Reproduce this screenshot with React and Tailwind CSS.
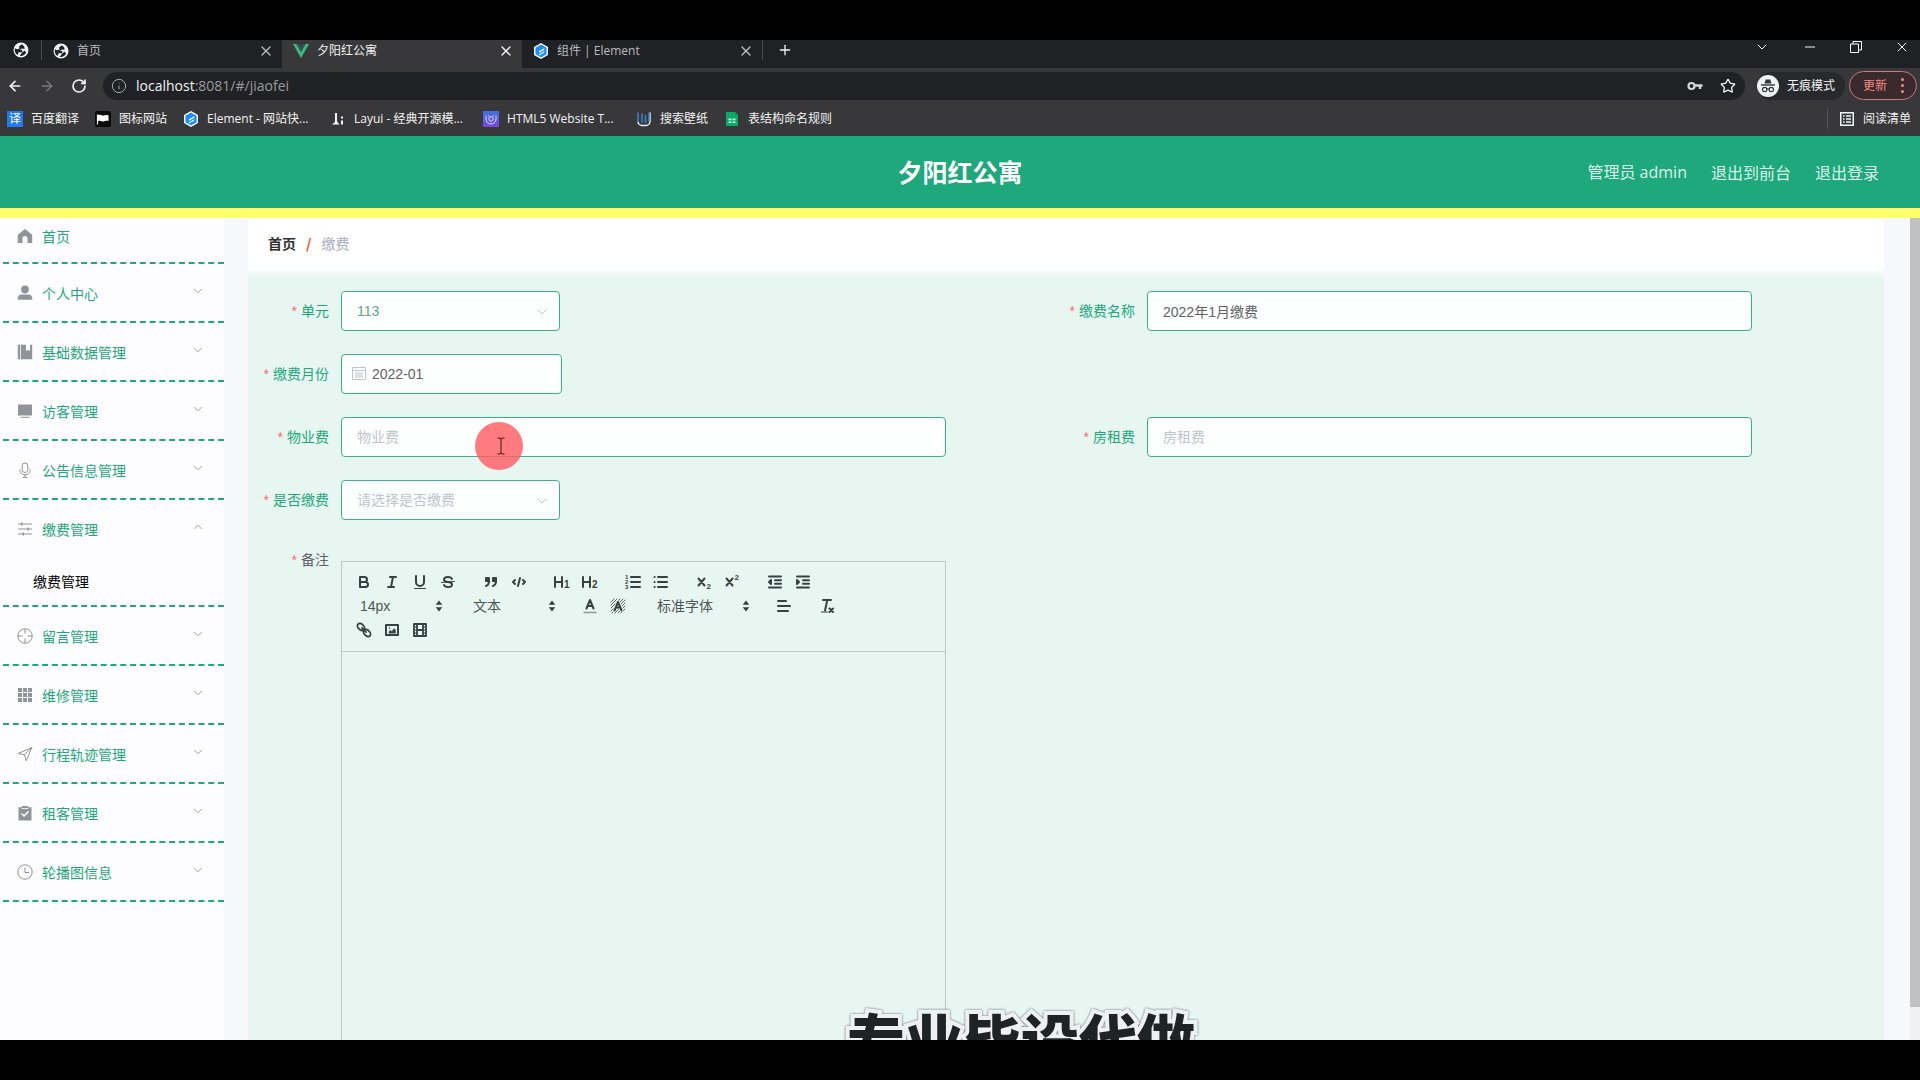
import React, { useState } from "react";
import {
  ArrowLeft,
  ArrowRight,
  ChevronDown,
  ChevronUp,
  Info,
  Minus,
  Plus,
  RotateCw,
  Star,
  X,
} from "lucide-react";

/* ---------- browser icons ---------- */

function GlobeIcon() {
  return (
    <svg viewBox="0 0 16 16" className="size-4 shrink-0">
      <circle cx="8" cy="8" r="7.5" fill="#f1f3f4" />
      <path
        d="M9 2.2 6 4.6l.6 1.8-2.4.9L2 6.2a6 6 0 0 0 2.6 6.7L5.8 10l3 .4.8-2L7 7.6l2.2-1.2L11.6 7l-.4-2.4zM9 10.8l-2.3 3.1c2.8.5 5.2-.9 6.4-3.4l-1.5-1.9z"
        fill="#202124"
      />
    </svg>
  );
}

function VueIcon() {
  return (
    <svg viewBox="0 0 16 14" className="h-[14px] w-4 shrink-0">
      <path d="M0 0h3.4L8 8l4.6-8H16L8 14z" fill="#41b883" />
      <path d="M3.4 0h2.8L8 3.2 9.8 0h2.8L8 8z" fill="#2b5a55" />
    </svg>
  );
}

function ElementIcon() {
  return (
    <svg viewBox="0 0 16 16" className="size-4 shrink-0">
      <path d="M8 0l7 4v8l-7 4-7-4V4z" fill="#fff" />
      <path d="M8 1.5l5.6 3.2v6.6L8 14.5l-5.600-3.200V4.700z" fill="#1e90f5" />
      <path d="M11.200 5.200 6 8.200v1.600l5.200-3zM11.200 8.200 6 11.200v1.400l5.200-3z" fill="#fff" />
    </svg>
  );
}

function TranslateIcon() {
  return (
    <span className="flex size-4 shrink-0 items-center justify-center bg-[#2279ea] text-xs leading-4 text-white">
      译
    </span>
  );
}

function FlagIcon() {
  return (
    <svg viewBox="0 0 16 16" className="size-4 shrink-0">
      <rect width="16" height="16" rx="2" fill="#0a0a0a" />
      <path d="M2.5 3.5v10" stroke="#fff" strokeWidth="1.2" />
      <path d="M3 4c2-1 4 1 6.5 0.4 1.5-.4 2.500-.4 4 0V10c-2.500-.8-4 .8-6 .4C6 10 4.500 9.600 3 10z" fill="#fff" />
    </svg>
  );
}

function LayuiIcon() {
  return (
    <svg viewBox="0 0 16 16" className="size-4 shrink-0" fill="#f1f3f4">
      <path d="M5 2h2v8.500l2.500 3H2l3-2.500z" />
      <path d="M11 5.500h2v2h-2zM11 9.500h2v4h-2z" />
    </svg>
  );
}

function RocketBookmarkIcon() {
  return (
    <svg viewBox="0 0 16 16" className="size-4 shrink-0">
      <defs>
        <linearGradient id="html5" x1="0" y1="0" x2="0" y2="1">
          <stop offset="0" stopColor="#3f74d8" />
          <stop offset="1" stopColor="#7a45dc" />
        </linearGradient>
      </defs>
      <rect width="16" height="16" fill="url(#html5)" />
      <g fill="none" stroke="#d9d4ff" strokeWidth="1">
        <path d="M3 4.500v3.500a5 5 0 0 0 10 0V4.500" />
        <circle cx="8" cy="8" r="2.200" />
        <path d="M5 4.500l1.500 1M11 4.500l-1.500 1" />
      </g>
    </svg>
  );
}

function WallpaperIcon() {
  return (
    <svg viewBox="0 0 16 16" className="size-4 shrink-0" fill="none">
      <path d="M2 10.500a4 4 0 0 0 4 4h4a4 4 0 0 0 4-4v-9" stroke="#e8f1fb" strokeWidth="1.500" />
      <path d="M2 1.500v9M6 2.500v9M9.500 4v8M13 1.500v9" stroke="#3f7fc6" strokeWidth="1.600" />
    </svg>
  );
}

function SheetIcon() {
  return (
    <svg viewBox="0 0 16 16" className="size-4 shrink-0">
      <path d="M2 1h9l3 3v11H2z" fill="#0ba868" />
      <path d="M4.500 7.500h3v1.800h-3zM8.500 7.500h3v1.800h-3zM4.500 10.500h3v1.500h-3zM8.500 10.500h3v1.500h-3z" fill="#c9f2df" />
    </svg>
  );
}

function KeyIcon() {
  return (
    <svg viewBox="0 0 16 10" className="h-[10px] w-4" fill="none">
      <circle cx="4.500" cy="5" r="3" stroke="#d5d6d8" strokeWidth="2.200" />
      <path d="M8 4.500h7.500M13 4.500v3.500" stroke="#d5d6d8" strokeWidth="2.400" />
    </svg>
  );
}

function IncognitoIcon() {
  return (
    <svg viewBox="0 0 22 22" className="size-[22px] shrink-0">
      <circle cx="11" cy="11" r="11" fill="#f1f3f4" />
      <path d="M7.500 8.500l1.200-4h4.600l1.200 4z" fill="#35363a" />
      <path d="M4 10h14" stroke="#35363a" strokeWidth="1.400" />
      <g fill="none" stroke="#35363a" strokeWidth="1.200">
        <circle cx="7.700" cy="14.500" r="2.200" />
        <circle cx="14.300" cy="14.500" r="2.200" />
        <path d="M9.900 14.200q1.100-.7 2.200 0" />
      </g>
    </svg>
  );
}

function ReadingListIcon() {
  return (
    <svg viewBox="0 0 14 14" className="size-[14px]" fill="none" stroke="#f1f3f4">
      <rect x="0.750" y="0.750" width="12.500" height="12.500" strokeWidth="1.500" />
      <path d="M3 4h1.500M6 4h5M3 7h1.500M6 7h5M3 10h1.500M6 10h5" strokeWidth="1.300" />
    </svg>
  );
}

function RestoreIcon() {
  return (
    <svg viewBox="0 0 12 12" className="size-3" fill="none" stroke="#fff">
      <path d="M0.500 3h8v8.500h-8zM3 3V0.500h8.500V9H8.500" />
    </svg>
  );
}

const tabs = [
  { title: "首页", icon: <GlobeIcon />, active: false },
  { title: "夕阳红公寓", icon: <VueIcon />, active: true },
  { title: "组件 | Element", icon: <ElementIcon />, active: false },
];

const bookmarks = [
  { title: "百度翻译", icon: <TranslateIcon />, width: "min-w-12" },
  { title: "图标网站", icon: <FlagIcon />, width: "min-w-12" },
  { title: "Element - 网站快...", icon: <ElementIcon />, width: "min-w-[107px]" },
  { title: "Layui - 经典开源模...", icon: <LayuiIcon />, width: "min-w-[113px]" },
  { title: "HTML5 Website T...", icon: <RocketBookmarkIcon />, width: "min-w-[113px]" },
  { title: "搜索壁纸", icon: <WallpaperIcon />, width: "min-w-12" },
  { title: "表结构命名规则", icon: <SheetIcon />, width: "min-w-12" },
];

function BrowserBar() {
  return (
    <div className="shrink-0 bg-[#38383a] font-['Open_Sans','Noto_Sans_CJK_SC',sans-serif] text-xs text-[#f1f3f4]">
      {/* Tabs */}
      <div className="flex h-7 bg-[#202124]">
        <button aria-label="首页" className="flex h-5 w-[42px] items-center justify-center border-r border-[#4a4c50]">
          <GlobeIcon />
        </button>
        {tabs.map((tab) => (
          <div
            key={tab.title}
            className={
              tab.active
                ? "flex w-60 items-center gap-2 bg-[#38383a] pr-2 pb-1.5 pl-[11px]"
                : "flex w-60 items-center gap-2 pr-2 pb-1.5 pl-[11px] text-[#b9bbbe]"
            }
          >
            {tab.icon}
            <span className="flex-1 truncate">{tab.title}</span>
            <button aria-label="关闭">
              <X className="size-4" strokeWidth={2} />
            </button>
          </div>
        ))}
        <button aria-label="新标签页" className="flex h-5 w-11 items-center justify-center border-l border-[#4a4c50]">
          <Plus className="size-4" />
        </button>
        <div className="ml-auto flex h-[14px] items-center gap-8 pr-[10px]">
          <ChevronDown className="size-4" strokeWidth={1.5} />
          <Minus className="size-4" strokeWidth={1.5} />
          <RestoreIcon />
          <X className="size-4" strokeWidth={1.5} />
        </div>
      </div>

      {/* Address */}
      <div className="flex h-[34px] items-center pt-px pr-[3px]">
        <div className="flex w-[103px] items-center gap-4 pl-[7px]">
          <ArrowLeft className="size-4" strokeWidth={2.5} />
          <ArrowRight className="size-4 text-[#7b7c80]" strokeWidth={2} />
          <RotateCw className="size-4" strokeWidth={2.5} />
        </div>
        <div className="flex h-7 flex-1 items-center gap-[9px] rounded-full bg-[#202124] pr-[9px] pl-2">
          <Info className="size-4 text-[#a7a9ac]" strokeWidth={1.5} />
          <span className="flex-1 text-sm text-[#9a9c9f]">
            <span className="text-[#f1f3f4]">localhost</span>:8081/#/jiaofei
          </span>
          <KeyIcon />
          <Star className="ml-2 size-4" strokeWidth={2} />
        </div>
        <div className="ml-3 flex h-7 items-center gap-2 rounded-full bg-[#28292c] pr-[10px]">
          <IncognitoIcon />
          无痕模式
        </div>
        <button className="ml-1 flex h-[29px] w-[68px] items-center justify-between rounded-full border border-[#c97782] bg-[#3a292d] pr-3 pl-[13px] text-[#f28b82]">
          更新
          <span className="flex flex-col gap-[3px]">
            <i className="size-[3px] rounded-full bg-[#f28b82]"></i>
            <i className="size-[3px] rounded-full bg-[#f28b82]"></i>
            <i className="size-[3px] rounded-full bg-[#f28b82]"></i>
          </span>
        </button>
      </div>

      {/* Bookmarks */}
      <div className="flex h-[34px] items-center gap-4 pr-[9px] pl-[7px]">
        {bookmarks.map((item) => (
          <a key={item.title} href="#" className="flex items-center gap-2">
            {item.icon}
            <span className={item.width}>{item.title}</span>
          </a>
        ))}
        <a href="#" className="ml-auto flex h-5 items-center gap-[9px] border-l border-[#55565a] pl-3">
          <ReadingListIcon />
          阅读清单
        </a>
      </div>
    </div>
  );
}

/* ---------- side menu ---------- */

const menuIcons = {
  home: (
    <path
      fill="currentColor"
      d="M8 1 1.200 6.500c-.3.300-.4.500-.4.900V15h4.700v-4.500a2.500 2.500 0 0 1 5 0V15h4.700V7.400c0-.4-.1-.600-.4-.900z"
    />
  ),
  user: (
    <path
      fill="currentColor"
      d="M8 .5a3.900 3.900 0 0 1 3.900 3.900c0 2.400-1.700 4.100-3.900 4.100S4.100 6.800 4.100 4.400A3.900 3.900 0 0 1 8 .5zM4.500 9.500h7c2.300 0 3.800 1.700 3.800 4v1.200H.7v-1.200c0-2.300 1.500-4 3.800-4z"
    />
  ),
  notebook: (
    <path fill="currentColor" d="M.8.8h2.400v14.400H.8zM4 .8h5v6.500l2-1.500 2 1.500V.8h2.200v14.400H4z" />
  ),
  platform: (
    <path fill="currentColor" d="M1 1.500h14v11H1zM3.500 13.800h9v1h-9z" />
  ),
  microphone: (
    <g fill="none" stroke="currentColor">
      <rect x="5.200" y="1" width="5.600" height="9.500" rx="2.800" />
      <path d="M2.800 7.500c0 3.300 2 5.300 5.200 5.300s5.200-2 5.200-5.300M8 12.800v2.500M5.500 15.400h5" />
    </g>
  ),
  operation: (
    <g fill="currentColor">
      <path d="M1 2.500h14v1H1zM1 7.500h14v1H1zM1 12.500h14v1H1z" />
      <path d="M4 1.500h1.500v3H4zM10.500 6.500h1.500v3h-1.500zM5.500 11.500h1.500v3H5.500z" />
    </g>
  ),
  aim: (
    <g fill="none" stroke="currentColor">
      <circle cx="8" cy="8" r="7.200" />
      <path d="M8 1v4.500M8 10.500V15M1 8h4.500M10.500 8H15" />
    </g>
  ),
  grid: (
    <path
      fill="currentColor"
      d="M1 1h4v4H1zM6 1h4v4H6zM11 1h4v4h-4zM1 6h4v4H1zM6 6h4v4H6zM11 6h4v4h-4zM1 11h4v4H1zM6 11h4v4H6zM11 11h4v4h-4z"
    />
  ),
  position: (
    <path
      fill="none"
      stroke="currentColor"
      strokeLinejoin="round"
      d="M14.800 1.500 1.200 7.500l6.300 1.300 1.800 6z M14.800 1.500 7.500 8.800"
    />
  ),
  claim: (
    <g>
      <path fill="currentColor" d="M1.500 2.200h3.500V1h6v1.200h3.500V15.500h-13z" />
      <path d="M4.500 8.500 7 11l4.500-4.500" fill="none" stroke="#fff" strokeWidth="1.500" />
      <path d="M4.500 3.500h7" stroke="#fff" strokeWidth=".8" />
    </g>
  ),
  time: (
    <g fill="none" stroke="currentColor">
      <circle cx="8" cy="8" r="7.200" />
      <path d="M8 3.500V8.500h4" />
    </g>
  ),
};

const menus = [
  { name: "个人中心", icon: "user" },
  { name: "基础数据管理", icon: "notebook" },
  { name: "访客管理", icon: "platform" },
  { name: "公告信息管理", icon: "microphone" },
  { name: "缴费管理", icon: "operation", children: ["缴费管理"] },
  { name: "留言管理", icon: "aim" },
  { name: "维修管理", icon: "grid" },
  { name: "行程轨迹管理", icon: "position" },
  { name: "租客管理", icon: "claim" },
  { name: "轮播图信息", icon: "time" },
];

function MenuIcon({ name }) {
  return (
    <svg viewBox="0 0 16 16" className="size-4 shrink-0 text-[#909399]">
      {menuIcons[name]}
    </svg>
  );
}

function SideMenu() {
  const [opened, setOpened] = useState("缴费管理");

  return (
    <nav className="w-56 shrink-0 bg-[#fdfcfe] pl-[3px] text-sm text-[#1fa87b]">
      <div className="border-b-2 border-dashed border-[#1fa87b]">
        <a href="#" className="flex h-11 items-center gap-[9px] pb-2 pl-[14px]">
          <MenuIcon name="home" />
          首页
        </a>
      </div>
      {menus.map((menu) => (
        <div key={menu.name} className="border-b-2 border-dashed border-[#1fa87b]">
          <button
            onClick={() => setOpened(opened === menu.name ? "" : menu.name)}
            className="flex h-[57px] w-full items-center gap-[9px] pr-[19px] pl-[14px] text-left"
          >
            <MenuIcon name={menu.icon} />
            <span className="flex-1">{menu.name}</span>
            {opened === menu.name ? (
              <ChevronUp className="mb-1 size-[14px] text-[#909399]" strokeWidth={1.5} />
            ) : (
              <ChevronDown className="mb-1 size-[14px] text-[#909399]" strokeWidth={1.5} />
            )}
          </button>
          {opened === menu.name &&
            menu.children?.map((child) => (
              <a key={child} href="#" className="flex h-12 items-center pl-[30px] text-black">
                {child}
              </a>
            ))}
        </div>
      ))}
    </nav>
  );
}

/* ---------- editor ---------- */

function ToolButton({ label, children }) {
  return (
    <button
      type="button"
      aria-label={label}
      className="flex h-6 w-7 items-center justify-center text-[#37413f]"
    >
      <svg
        viewBox="0 0 18 18"
        className="size-[18px]"
        fill="none"
        stroke="currentColor"
        strokeWidth="2"
        strokeLinecap="round"
        strokeLinejoin="round"
      >
        {children}
      </svg>
    </button>
  );
}

function Glyph({ x, y, size, children }) {
  return (
    <text x={x} y={y} fontSize={size} fontWeight="700" fill="currentColor" stroke="none">
      {children}
    </text>
  );
}

function Picker({ label, options, wide }) {
  return (
    <div className={wide ? "relative w-[108px]" : "relative w-[98px]"}>
      <select
        aria-label={label}
        className="block h-6 w-full appearance-none bg-transparent pl-[10px] text-sm leading-6 text-[#4c5654]"
      >
        {options.map((option) => (
          <option key={option}>{option}</option>
        ))}
      </select>
      <svg viewBox="0 0 18 18" className="pointer-events-none absolute top-[3px] right-0 size-[18px] text-[#37413f]">
        <path d="M9 3.500l3.300 4.300H5.700zM9 14.500l3.300-4.300H5.700z" fill="currentColor" />
      </svg>
    </div>
  );
}

function Editor() {
  return (
    <div className="mt-[21px] flex w-3/4 flex-col border border-[#b9cbc7]">
      <div className="border-b border-[#b9cbc7] p-2 pb-[9px]">
        <div className="flex gap-[15px]">
          <div className="flex">
            <ToolButton label="加粗">
              <path d="M5 4h4.500a2.500 2.500 0 0 1 0 5H5zM5 9h5.500a2.500 2.500 0 0 1 0 5H5z" />
            </ToolButton>
            <ToolButton label="斜体">
              <path d="M7 4h6M5 14h6M8 14l2-10" />
            </ToolButton>
            <ToolButton label="下划线">
              <path d="M5 3v6a4 4 0 0 0 8 0V3" />
              <path d="M3.500 15.500h11" strokeWidth="1" />
            </ToolButton>
            <ToolButton label="删除线">
              <path d="M12.900 6C12.500 4.800 11 4 9 4 6.800 4 5 5.100 5 6.500 5 8 6.500 8.800 9 9s4 .9 4 2.500c0 1.400-1.800 2.500-4 2.500-2 0-3.500-.8-3.900-2" />
              <path d="M2.500 9.500l13-1" strokeWidth="1" />
            </ToolButton>
          </div>
          <div className="flex">
            <ToolButton label="引用">
              <path d="M4 5h3v3H4zM11 5h3v3h-3z" fill="currentColor" />
              <path d="M7 8c0 4-3 5-3 5M14 8c0 4-3 5-3 5" />
            </ToolButton>
            <ToolButton label="代码">
              <path d="M5 7L3 9l2 2M13 7l2 2-2 2M10 5L8 13" />
            </ToolButton>
          </div>
          <div className="flex">
            <ToolButton label="标题1">
              <path d="M2 4v10M9 4v10M2 9h7" />
              <Glyph x="11" y="15" size="10">1</Glyph>
            </ToolButton>
            <ToolButton label="标题2">
              <path d="M2 4v10M9 4v10M2 9h7" />
              <Glyph x="11" y="15" size="10">2</Glyph>
            </ToolButton>
          </div>
          <div className="flex">
            <ToolButton label="有序列表">
              <path d="M7 4h9M7 9h9M7 14h9" />
              <Glyph x="1" y="6" size="6">1</Glyph>
              <Glyph x="1" y="11" size="6">2</Glyph>
              <Glyph x="1" y="16" size="6">3</Glyph>
            </ToolButton>
            <ToolButton label="无序列表">
              <path d="M6 4h9M6 9h9M6 14h9M2.500 4h.1M2.500 9h.1M2.500 14h.1" />
            </ToolButton>
          </div>
          <div className="flex">
            <ToolButton label="下标">
              <path d="M3.500 5.500l6 7M9.500 5.500l-6 7" />
              <Glyph x="11.500" y="16" size="8">2</Glyph>
            </ToolButton>
            <ToolButton label="上标">
              <path d="M3.500 5.500l6 7M9.500 5.500l-6 7" />
              <Glyph x="11.500" y="7" size="8">2</Glyph>
            </ToolButton>
          </div>
          <div className="flex">
            <ToolButton label="减少缩进">
              <path d="M3 3.500h12M3 14.500h12M9 7.200h6M9 10.800h6" />
              <path d="M5 7v4L3 9z" fill="currentColor" />
            </ToolButton>
            <ToolButton label="增加缩进">
              <path d="M3 3.500h12M3 14.500h12M9 7.200h6M9 10.800h6" />
              <path d="M3 7v4l2-2z" fill="currentColor" />
            </ToolButton>
          </div>
        </div>
        <div className="flex gap-[15px]">
          <Picker label="字号" options={["14px", "16px", "18px", "20px"]} />
          <Picker label="标题" options={["文本", "标题1", "标题2"]} />
          <div className="flex">
            <ToolButton label="字体颜色">
              <path d="M3 15.500h12" strokeWidth="1.500" opacity=".5" />
              <path d="M5.500 11.500L9 3l3.500 8.500M7 9h4" />
            </ToolButton>
            <ToolButton label="背景颜色">
              <path
                d="M2 5l3-3M2 8l6-6M2 11l9-9M2 14l12-12M3 16L16 3M6 16l10-10M9 16l7-7M12 16l4-4"
                strokeWidth=".8"
              />
              <path d="M5.500 13.500L9 5l3.500 8.500M7 10.500h4" stroke="#e8f6f2" strokeWidth="3.500" />
              <path d="M5.500 13.500L9 5l3.500 8.500M7 10.500h4" />
            </ToolButton>
          </div>
          <Picker label="字体" wide options={["标准字体", "宋体", "黑体"]} />
          <ToolButton label="对齐">
            <path d="M3 4h8M3 9h12M3 14h10" />
          </ToolButton>
          <ToolButton label="清除格式">
            <path d="M5 3h8M9.300 3L7 13.500" />
            <path d="M3.500 15h6" strokeWidth="1" />
            <path d="M11.500 11.500l3.500 3.500M15 11.500L11.500 15" />
          </ToolButton>
        </div>
        <div className="flex">
          <ToolButton label="链接">
            <g strokeWidth="1.800">
              <ellipse cx="6" cy="6" rx="4.200" ry="2.800" transform="rotate(45 6 6)" />
              <ellipse cx="12" cy="12" rx="4.200" ry="2.800" transform="rotate(45 12 12)" />
              <path d="M7 7l4 4" />
            </g>
          </ToolButton>
          <ToolButton label="图片">
            <path d="M3 4h12v10H3z" />
            <path d="M6 12V10.500l1.500-1 1.500 1 2-3 1.500 1.500V12z" fill="currentColor" strokeWidth=".5" />
            <circle cx="6.500" cy="7" r=".8" fill="currentColor" stroke="none" />
          </ToolButton>
          <ToolButton label="视频">
            <path d="M3 3h12v12H3zM6 3v12M12 3v12M6 9h6" strokeWidth="1.800" />
            <path d="M3.500 6h2M3.500 9h2M3.500 12h2M12.500 6h2M12.500 9h2M12.500 12h2" strokeWidth="1" />
          </ToolButton>
        </div>
      </div>
      <textarea
        aria-label="备注内容"
        className="block min-h-[500px] w-full resize-none bg-transparent p-4 text-sm outline-none"
      ></textarea>
    </div>
  );
}

/* ---------- form ---------- */

function FormItem({ id, label, dark, children }) {
  return (
    <div className="flex">
      <label
        htmlFor={id}
        className={
          dark
            ? "w-[93px] shrink-0 pr-3 text-right text-sm leading-10 text-[#606266]"
            : "w-[93px] shrink-0 pr-3 text-right text-sm leading-10 text-[#1fa87b]"
        }
      >
        <span className="mr-1 text-[#f56c6c]">*</span>
        {label}
      </label>
      {children}
    </div>
  );
}

function SelectBox({ id, value, options, onChange, className }) {
  return (
    <div className="relative w-[219px]">
      <select id={id} value={value} onChange={onChange} className={className}>
        {options.map((option) => (
          <option key={option}>{option}</option>
        ))}
      </select>
      <ChevronDown
        className="pointer-events-none absolute top-[13px] right-[10px] size-4 text-[#c0c4cc]"
        strokeWidth={1.5}
      />
    </div>
  );
}

function JiaofeiForm() {
  const [form, setForm] = useState({
    danyuan: "113",
    mingcheng: "2022年1月缴费",
    yuefen: "2022-01",
    wuyefei: "",
    fangzufei: "",
    shifou: "请选择是否缴费",
  });

  const handleChange = (e) => {
    setForm({ ...form, [e.target.id]: e.target.value });
  };

  const box =
    "block h-10 rounded border border-[#3fae8a] bg-[#fdfffe] px-[15px] text-sm placeholder:text-[#c0c4cc] outline-none";

  return (
    <form className="flex-1 bg-[#e8f6f2] pt-[14px] pr-6 font-['Liberation_Sans','Noto_Sans_CJK_SC',sans-serif]">
      <div className="grid grid-cols-2 gap-y-[23px]">
        <FormItem id="danyuan" label="单元">
          <SelectBox
            id="danyuan"
            value={form.danyuan}
            options={["113", "114", "115"]}
            onChange={handleChange}
            className={`${box} w-full appearance-none text-[#5fa58d]`}
          />
        </FormItem>
        <FormItem id="mingcheng" label="缴费名称">
          <input
            id="mingcheng"
            value={form.mingcheng}
            onChange={handleChange}
            className={`${box} w-3/4 text-[#606266]`}
          />
        </FormItem>

        <div className="col-span-2">
          <FormItem id="yuefen" label="缴费月份">
            <div className="relative w-[221px]">
              <input
                id="yuefen"
                value={form.yuefen}
                onChange={handleChange}
                className={`${box} w-full pl-[30px] text-[#606266]`}
              />
              <svg
                viewBox="0 0 14 14"
                className="pointer-events-none absolute top-3 left-[11px] size-[14px] text-[#c0c4cc]"
                fill="none"
                stroke="currentColor"
              >
                <path d="M.5 1.500h13v12H.5zM.5 4.500h13M3 7h8M3 9h8M3 11h8M3.500.500v2M10.500.500v2" />
              </svg>
            </div>
          </FormItem>
        </div>

        <FormItem id="wuyefei" label="物业费">
          <input
            id="wuyefei"
            value={form.wuyefei}
            placeholder="物业费"
            onChange={handleChange}
            className={`${box} w-3/4 text-[#606266]`}
          />
        </FormItem>
        <FormItem id="fangzufei" label="房租费">
          <input
            id="fangzufei"
            value={form.fangzufei}
            placeholder="房租费"
            onChange={handleChange}
            className={`${box} w-3/4 text-[#606266]`}
          />
        </FormItem>

        <div className="col-span-2">
          <FormItem id="shifou" label="是否缴费">
            <SelectBox
              id="shifou"
              value={form.shifou}
              options={["请选择是否缴费", "是", "否"]}
              onChange={handleChange}
              className={`${box} w-full appearance-none text-[#c0c4cc]`}
            />
          </FormItem>
        </div>
      </div>

      <div className="mt-5 grid grid-cols-2">
        <FormItem label="备注" dark>
          <Editor />
        </FormItem>
      </div>
    </form>
  );
}

/* ---------- page ---------- */

function App() {
  return (
    <div className="flex h-screen flex-col bg-black py-10 font-['Noto_Sans_CJK_SC',sans-serif]">
      <BrowserBar />

      <header className="relative flex h-[82px] shrink-0 items-center justify-end border-b-10 border-[#feff6c] bg-[#1fa87b] pr-[41px] text-white">
        <h1 className="absolute inset-x-0 text-center text-[25px] font-bold">夕阳红公寓</h1>
        <div className="relative flex gap-6 text-base text-[#d9f3ea]">
          <span className="font-['Open_Sans','Noto_Sans_CJK_SC',sans-serif]">管理员 admin</span>
          <a href="#">退出到前台</a>
          <a href="#">退出登录</a>
        </div>
      </header>

      <div className="relative flex min-h-0 flex-1 overflow-hidden bg-[#f7f8fb]">
        <SideMenu />

        <main className="mr-[26px] ml-6 flex flex-1 flex-col">
          <div className="flex h-[50px] shrink-0 items-center gap-[10px] bg-white px-5 text-sm">
            <a href="#" className="font-bold text-[#303133]">
              首页
            </a>
            <span className="font-bold text-[#f04a3a]">/</span>
            <span className="text-[#a9abbe]">缴费</span>
          </div>
          <div className="h-[9px] shrink-0 bg-linear-to-b from-white to-[#e8f6f2]"></div>
          <JiaofeiForm />
        </main>

        <div className="w-[10px] shrink-0 bg-[#f1f1f1]">
          <div className="h-[96%] bg-[#c1c1c1]"></div>
        </div>

        {/* Mouse highlight */}
        <div className="pointer-events-none absolute top-[204px] left-[475px] flex size-12 items-center justify-center rounded-full bg-[#ff5a60]/80">
          <svg viewBox="0 0 8 18" className="ml-1 h-[18px] w-2" fill="none" stroke="#40181a">
            <path d="M.5 1h2.500l1 1 1-1h2.500M.5 17h2.500l1-1 1 1h2.500M4 2v14" />
          </svg>
        </div>

        {/* Caption */}
        <p className="pointer-events-none absolute inset-x-0 bottom-[-34px] pl-[122px] text-center text-[58px] leading-[72px] font-black text-[#1d2423] drop-shadow-[0_0_1px_#5a6664] [-webkit-text-stroke:8px_#eff0f1] [paint-order:stroke_fill]">
          专业毕设代做
        </p>
      </div>
    </div>
  );
}

export default App;
